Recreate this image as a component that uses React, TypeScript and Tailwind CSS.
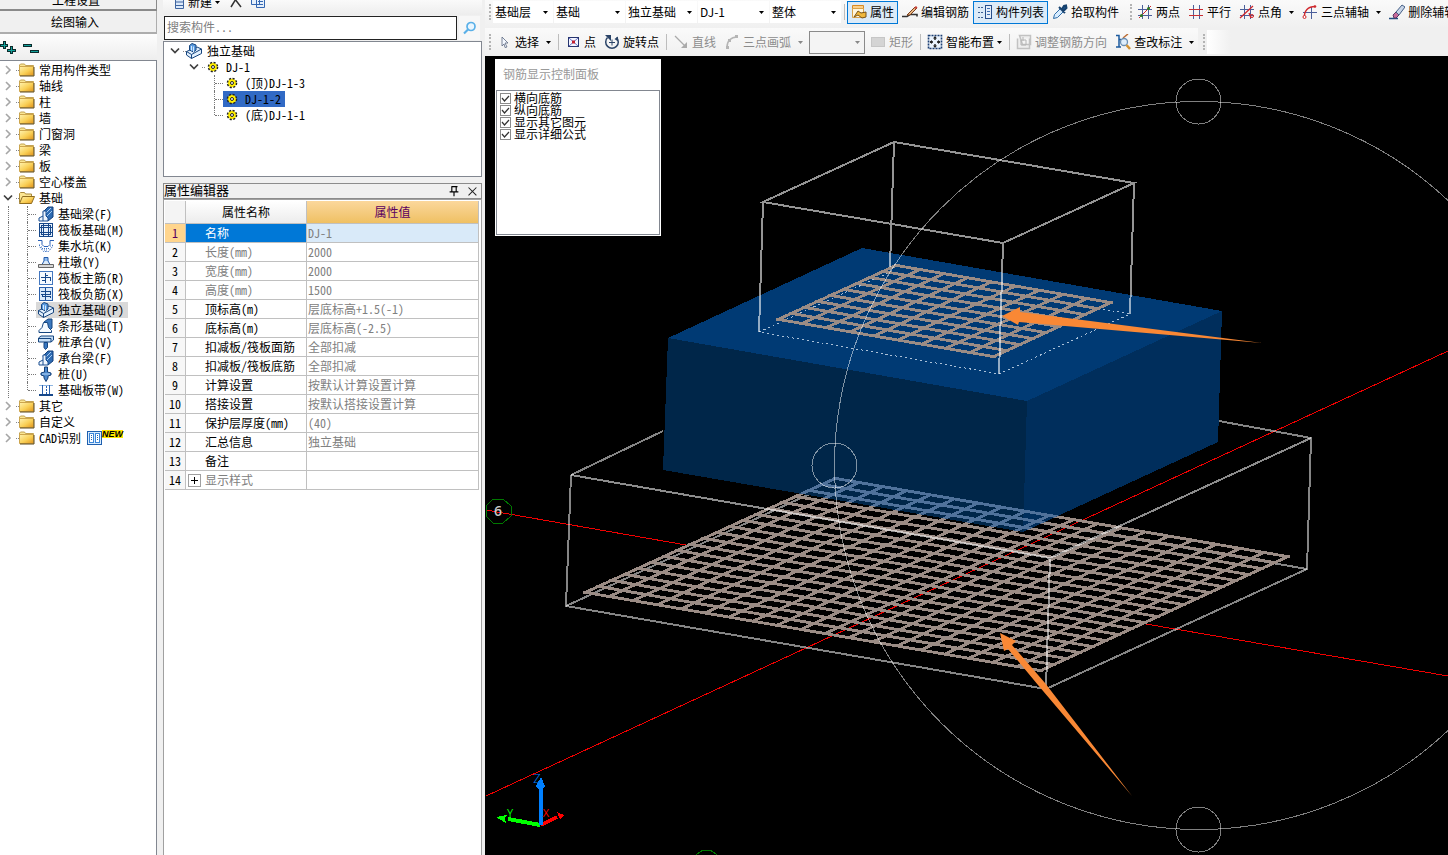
import { useState, type ReactNode } from "react";

type IconProps = { className?: string };

function Svg({ children, size = 16, className = "" }: { children: ReactNode; size?: number; className?: string }) {
  return (
    <svg width={size} height={size} viewBox="0 0 16 16" fill="none" aria-hidden="true" className={`shrink-0 ${className}`}>
      {children}
    </svg>
  );
}

/* ---------- tree icons ---------- */

function Folder({ open = false }: { open?: boolean }) {
  return (
    <Svg>
      <defs>
        <linearGradient id="folder" x1="0" y1="0" x2="1" y2="1">
          <stop offset="0" stopColor="#fff3b0" />
          <stop offset=".55" stopColor="#f9cf55" />
          <stop offset="1" stopColor="#e0931c" />
        </linearGradient>
      </defs>
      {open ? (
        <>
          <path d="M.5 12.5v-9l1-1h4l1 1.500h6v2" fill="#fbe694" stroke="#a98a3c" />
          <path d="M.5 13.500 3.500 6.500h12l-3 7z" fill="url(#folder)" stroke="#8f6d20" />
        </>
      ) : (
        <>
          <path d="M.5 4V3l1-1h4l1 1.500h8V6H.5z" fill="#fbe694" stroke="#c2a252" />
          <path d="M.5 4.500h14v9H.5z" fill="url(#folder)" stroke="#cda54c" />
          <path d="M15 5v9H1" stroke="#5e4a1d" />
        </>
      )}
    </Svg>
  );
}

function Chevron({ open = false }: { open?: boolean }) {
  return (
    <Svg className="w-4">
      {open ? (
        <path d="m4 5.500 4 4 4-4" stroke="#404040" strokeWidth="1.700" />
      ) : (
        <path d="m6 4 4 4-4 4" stroke="#a6a6a6" strokeWidth="1.600" />
      )}
    </Svg>
  );
}

const BeamIcon = () => (
  <Svg>
    <path d="M5 6 10 1h5v10l-5 4z" fill="#2f6cb3" stroke="#123f7a" />
    <path d="M8 7 13 2M9 10l5-5" stroke="#a9cdf2" />
    <path d="M1 15v-3l4-2V5h3v5l2 2v3z" fill="#eef5fd" stroke="#1b4f91" />
    <path d="M5 10v5" stroke="#1b4f91" />
  </Svg>
);
const RaftIcon = () => (
  <Svg>
    <g shapeRendering="crispEdges" stroke="#17488a">
      <rect x="1.500" y="1.500" width="13" height="13" fill="#e6f1fc" />
      <path d="M3.500 3.500h9v9h-9zM5.500 1.500v13M10.500 1.500v13M1.500 5.500h13M1.500 10.500h13" />
    </g>
  </Svg>
);
const PitIcon = () => (
  <Svg>
    <path d="M0 2.500h4v4l2 2h4l2-2v-4h4" stroke="#2c62b8" />
    <path d="M1.500 6.500v2l4 5h5l4-5v-2" stroke="#3f74c4" strokeDasharray="1.500 1" />
    <path d="M3 9h2M4 10.500h8M6 12h4M12 8h2" stroke="#3f74c4" strokeDasharray="1 1" />
  </Svg>
);
const PierIcon = () => (
  <Svg>
    <path d="M6 3.500h4v4H6z" fill="#8fbcf0" stroke="#2159a8" />
    <path d="m6 7-2 3.500h8L10 7" fill="#dcebfb" stroke="#2159a8" />
    <path d="M.5 10.500h15v3H.5z" fill="#d8d8d8" stroke="#666" />
  </Svg>
);
const MainBarIcon = () => (
  <Svg>
    <g shapeRendering="crispEdges">
      <rect x="1.500" y="1.500" width="13" height="13" fill="#f5faff" stroke="#4478c0" />
      <path d="M3 7.500h10M3.500 10.500h4M7.500 3v10M7 5.500h3M12.500 7v4" stroke="#17488a" />
    </g>
  </Svg>
);
const NegBarIcon = () => (
  <Svg>
    <g shapeRendering="crispEdges">
      <rect x="1.500" y="1.500" width="13" height="13" fill="#dbeafa" stroke="#2a60ad" />
      <path d="M7.500 2v12M3 5.500h9v2M4 10.500h8M4 8v2M12 10v2M3 8.500h10" stroke="#17488a" />
    </g>
  </Svg>
);
const PadIcon = () => (
  <Svg>
    <path d="M.5 8.500 11 4l4.500 2v4.500L5.500 15.500l-5-3.500z" fill="#e3f0fd" stroke="#16457f" />
    <path d="m.5 8.500 5 3 10-5.500M5.500 11.500v4" stroke="#16457f" />
    <path d="M3.500 2.500 6 .5l4 1.500v5L7.500 9l-4-2z" fill="#5a9be0" stroke="#16457f" />
    <path d="M5.500 3v4.500M7.500 3.500V9" stroke="#d6e9fb" />
  </Svg>
);
const StripIcon = () => (
  <Svg>
    <path d="m6 4 4-3h4v9l-2 2z" fill="#3c79bf" stroke="#15457f" />
    <path d="M1 14.500v-2l3-3 1.500-5h4l1 5 3 3v2z" fill="#f5faff" stroke="#15457f" />
  </Svg>
);
const CapIcon = () => (
  <Svg>
    <path d="M.5 4 3 2h12.500v4L13 8H.5z" fill="#c7dff7" stroke="#15457f" />
    <path d="M.5 4.500H13V8" stroke="#15457f" />
    <path d="M6 8.500v5l1.500 2 2-2v-5z" fill="#3a78c0" stroke="#15457f" />
  </Svg>
);
const PileIcon = () => (
  <Svg>
    <path d="M6.500 1h3v5l3.500 1v2L10 10v2l-2 3.500L6 12v-2L3 9V7l3.500-1z" fill="#4d89cd" stroke="#123e77" />
    <path d="M4 8h8" stroke="#b9d7f5" />
  </Svg>
);
const BandIcon = () => (
  <Svg>
    <g shapeRendering="crispEdges">
      <path d="M1 3.500h14" stroke="#8fb6e2" />
      <path d="M1 12.500h14" stroke="#17488a" strokeWidth="2" />
      <path d="M4.500 3v9M11.500 3v9" stroke="#2a60ad" />
      <path d="M8 4v8" stroke="#2a60ad" strokeDasharray="2 1" />
    </g>
  </Svg>
);
const GearIcon = () => (
  <Svg>
    <circle cx="8" cy="8" r="4.300" fill="#ffee00" stroke="#222" strokeWidth="2" strokeDasharray="2 1.380" />
    <circle cx="8" cy="8" r="3.800" fill="#ffee00" />
    <circle cx="8" cy="8" r="1.500" fill="#fff" stroke="#222" />
  </Svg>
);
const CadIcon = () => (
  <Svg>
    <g shapeRendering="crispEdges">
      <rect x="1.500" y="1.500" width="14" height="13" fill="#d8ecff" stroke="#1e5fae" />
      <path d="M3.500 3.500h4v9h-4zM9.500 3.500h4v9h-4z" fill="#fff" stroke="#3c86d8" />
      <path d="M5.500 5v6M11.500 5v6" stroke="#1e5fae" strokeDasharray="1 1" />
    </g>
  </Svg>
);

/* ---------- toolbar icons ---------- */

const PropertyIcon = () => (
  <Svg>
    <path d="M1.500 1.500h11v4h-11z" fill="#fbcf8a" stroke="#d98a22" />
    <path d="M1.500 4.500h11v9h-11z" fill="#fff6dc" stroke="#d9a24a" />
    <path d="m3 13 4-6 3 2 5-1v5l-4 1-4-3z" fill="#f0b83c" stroke="#77531a" />
  </Svg>
);
const EditBarIcon = () => (
  <Svg>
    <path d="M0 12.500h5l3-2h7v2" stroke="#333" strokeWidth="1.600" />
    <path d="m5 11 8-8 2 1-7 7z" fill="#e8b984" stroke="#7c3f1d" />
    <path d="m12 4 2-2 1.500 1.500-1.500 1.500z" fill="#c8423a" />
  </Svg>
);
const ListIcon = () => (
  <Svg>
    <g shapeRendering="crispEdges">
      <path d="M1 3.500h6M1 8.500h6M1 13.500h6" stroke="#3d5f93" strokeDasharray="2 1" />
      <rect x="8.500" y="1.500" width="6" height="13" fill="#e4eefa" stroke="#274f8c" />
      <path d="M10 4.500h3M10 7.500h3M10 10.500h3" stroke="#3f6fb2" />
    </g>
  </Svg>
);
const PickerIcon = () => (
  <Svg>
    <path d="m1.500 14.500 1-4 6-6 3 3-6 6z" fill="#d7ecff" stroke="#2e6ca8" />
    <path d="m7 3 6 6M10 5l2-3 2-.5.5 2.500-3 3z" fill="#1a558f" stroke="#17426e" strokeWidth="2" />
  </Svg>
);
const AxisGrid = ({ children }: { children?: ReactNode }) => (
  <Svg>
    <path d="M5.500 1v14M11.500 1v14M1 5.500h14M1 11.500h14" stroke="#4b5f9b" shapeRendering="crispEdges" />
    {children}
  </Svg>
);
const TwoPointIcon = () => (
  <AxisGrid>
    <path d="M2 14 14 2" stroke="#d0282d" />
    <circle cx="4.500" cy="11.500" r="1.500" fill="#257c25" />
    <circle cx="11.500" cy="4.500" r="1.500" fill="#257c25" />
  </AxisGrid>
);
const ParallelIcon = () => (
  <AxisGrid>
    <path d="M1 5.500h14M1 11.500h14" stroke="#c92f35" shapeRendering="crispEdges" />
  </AxisGrid>
);
const AngleIcon = () => (
  <AxisGrid>
    <path d="m1 14 13-12M10 9l2 5" stroke="#d0282d" strokeWidth="1.300" />
    <circle cx="13" cy="12" r="1.500" stroke="#d0282d" />
  </AxisGrid>
);
const ArcAxisIcon = () => (
  <Svg>
    <path d="M1 8.500h14M9.500 3v12" stroke="#4b5f9b" shapeRendering="crispEdges" />
    <path d="M2.500 13C2 7 6 2.500 13 2.500" stroke="#d0282d" strokeWidth="1.400" />
    <circle cx="2.500" cy="13" r="1.500" fill="#fff" stroke="#d0282d" />
    <circle cx="13" cy="2.500" r="1.300" fill="#d0282d" />
  </Svg>
);
const EraserIcon = () => (
  <Svg>
    <path d="M0 14.500h9" stroke="#234d80" strokeWidth="1.500" />
    <path d="m4 11 3-3 3 3-3 3H5z" fill="#c76a9a" stroke="#5b3763" />
    <path d="m7 8 6-7 3 2-6 8z" fill="#c9d6e8" stroke="#455f86" />
  </Svg>
);
const CursorIcon = () => (
  <Svg>
    <path d="m6 3 6 6H9l2 4-2 .5L8 10l-2 2z" fill="#f4f8ff" stroke="#5a6780" strokeWidth=".8" />
  </Svg>
);
const PointIcon = () => (
  <Svg>
    <g shapeRendering="crispEdges">
      <rect x="3.500" y="3.500" width="10" height="9" fill="#f4f5ff" stroke="#27356f" />
    </g>
    <path d="m4 4 9 8M13 4l-9 8" stroke="#6b78c8" />
    <rect x="7" y="6.500" width="3" height="3" fill="#c41f2e" />
  </Svg>
);
const RotateIcon = () => (
  <Svg>
    <path d="M3.500 3.500a6.300 6.300 0 1 0 9 0" stroke="#2b4468" strokeWidth="1.500" />
    <path d="M1 1h6v6zM14 2.500v5L10.500 5z" fill="#2b4468" />
    <path d="M8 5.500v6M5 8.500h6" stroke="#2b4468" />
  </Svg>
);
const LineIcon = () => (
  <Svg>
    <path d="m2 2 11 11" stroke="#aaa" strokeWidth="1.300" />
    <path d="M14 8v6H8z" fill="#aaa" />
  </Svg>
);
const ArcIcon = () => (
  <Svg>
    <path d="M3 13C3 7 7 3 13 3" stroke="#b5b5b5" strokeWidth="1.500" />
    <path d="M2 12h3v3H2zM11 1h3v3h-3zM4 5h3v3H4z" fill="#b5b5b5" />
  </Svg>
);
const RectIcon = () => (
  <Svg>
    <rect x="1.500" y="3.500" width="13" height="9" fill="#d4d4d4" stroke="#c6c6c6" />
  </Svg>
);
const SmartIcon = () => (
  <Svg>
    <rect x="1.500" y="1.500" width="13" height="13" fill="#eaf3fd" stroke="#1c3f73" strokeWidth="1.600" strokeDasharray="2 1" />
    <path d="M8 3v3M8 10v3M3 8h3M10 8h3" stroke="#111" strokeWidth="1.300" />
    <path d="m8 2 2 2.500H6zM8 14l2-2.500H6zM2.500 8 5 6v4zM13.500 8 11 6v4z" fill="#222" />
  </Svg>
);
const AdjustIcon = () => (
  <Svg>
    <path d="M1.500 4.500v10h12v-10M3.500 1.500h11v9h-8z" fill="#eee" stroke="#c2c2c2" strokeWidth="1.500" />
    <path d="M5 6h5v5H5zM7 3v4" stroke="#b4b4b4" />
  </Svg>
);
const CheckMarkIcon = () => (
  <Svg>
    <path d="M1 1.500h3v4h2M4 5v8H1M4 13h2" stroke="#1c5b9f" strokeWidth="1.500" />
    <path d="m8 4 5-4" stroke="#bb6c34" strokeWidth="1.500" />
    <circle cx="9" cy="8" r="3.500" fill="#dfeefb" stroke="#6b8fb3" strokeWidth="1.300" />
    <path d="m11.500 11 3.500 4" stroke="#d39233" strokeWidth="2.500" />
  </Svg>
);

/* ---------- left navigation ---------- */

const folders = ["常用构件类型", "轴线", "柱", "墙", "门窗洞", "梁", "板", "空心楼盖"];
const foundation: { label: string; Icon: (p: IconProps) => ReactNode }[] = [
  { label: "基础梁(F)", Icon: BeamIcon },
  { label: "筏板基础(M)", Icon: RaftIcon },
  { label: "集水坑(K)", Icon: PitIcon },
  { label: "柱墩(Y)", Icon: PierIcon },
  { label: "筏板主筋(R)", Icon: MainBarIcon },
  { label: "筏板负筋(X)", Icon: NegBarIcon },
  { label: "独立基础(P)", Icon: PadIcon },
  { label: "条形基础(T)", Icon: StripIcon },
  { label: "桩承台(V)", Icon: CapIcon },
  { label: "承台梁(F)", Icon: BeamIcon },
  { label: "桩(U)", Icon: PileIcon },
  { label: "基础板带(W)", Icon: BandIcon },
];

function FolderRow({ label, open = false, children }: { label: string; open?: boolean; children?: ReactNode }) {
  return (
    <li className="flex h-4 items-center">
      <Chevron open={open} />
      <span className="w-[3px] border-t border-dotted border-[#888]" />
      <Folder open={open} />
      <span className="ml-1 whitespace-nowrap">{label}</span>
      {children}
    </li>
  );
}

function Navigation() {
  const [selected, setSelected] = useState("独立基础(P)");
  return (
    <nav className="flex w-[157px] shrink-0 flex-col bg-[#f0f0f0]">
      <button className="flex h-[11px] items-end justify-center overflow-hidden border-r border-b-2 border-[#8a8a8a] pr-1 leading-[18px]">
        <span>工程设置</span>
      </button>
      <button className="h-[23px] border-r border-b-2 border-[#adadad] pr-[6px] text-center">绘图输入</button>
      <div className="flex h-[26px] items-center bg-gradient-to-b from-[#fdfdfd] to-[#eeeeee]">
        <button aria-label="全部展开">
          <Svg>
            <g shapeRendering="crispEdges">
              <path d="M4 2v8M0 6h8M11 7v8M7 11h9" stroke="#0b2b2b" strokeWidth="3" />
              <path d="M4 3v6M1 6h6M11 8v6M8 11h7" stroke="#11a09a" />
            </g>
          </Svg>
        </button>
        <button aria-label="全部折叠" className="ml-[7px]">
          <Svg>
            <g shapeRendering="crispEdges">
              <path d="M0 6h9M7 12h9" stroke="#0b2b2b" strokeWidth="3" />
              <path d="M1 6h7M8 12h7" stroke="#11a09a" />
            </g>
          </Svg>
        </button>
      </div>
      <ul className="flex-1 border-t border-r border-[#828790] bg-white pt-px">
        {folders.map((f) => (
          <FolderRow key={f} label={f} />
        ))}
        <FolderRow label="基础" open />
        {foundation.map(({ label, Icon }, i) => (
          <li key={label} className="flex h-4 items-center pl-2">
            <span className="h-4 w-[19px] border-l border-dotted border-[#777]" />
            <span className={i === foundation.length - 1 ? "h-2 w-px self-start border-l border-dotted border-[#777]" : "h-4 w-px border-l border-dotted border-[#777]"} />
            <span className="w-2 border-t border-dotted border-[#777]" />
            <button
              onClick={() => setSelected(label)}
              className={`flex h-4 items-center gap-1 pr-1 pl-[2px] whitespace-nowrap ${selected === label ? "bg-[#d9d9d9]" : ""}`}
            >
              <Icon />
              {label}
            </button>
          </li>
        ))}
        <FolderRow label="其它" />
        <FolderRow label="自定义" />
        <FolderRow label="CAD识别">
          <span className="ml-[5px] flex">
            <CadIcon />
          </span>
          <span className="mb-2 bg-[#ffe600] font-['Liberation_Sans',sans-serif] text-[9px] leading-[8px] font-bold italic">NEW</span>
        </FolderRow>
      </ul>
    </nav>
  );
}

/* ---------- component list and properties ---------- */

function ComponentTree() {
  const [selected, setSelected] = useState("DJ-1-2");
  const leaves = ["(顶)DJ-1-3", "DJ-1-2", "(底)DJ-1-1"];
  return (
    <ul className="h-[136px] border border-[#828790] bg-white pt-px">
      <li className="flex h-4 items-center pl-[3px]">
        <Chevron open />
        <span className="w-[3px] border-t border-dotted border-[#888]" />
        <PadIcon />
        <span className="ml-[5px]">独立基础</span>
      </li>
      <li className="flex h-4 items-center pl-[22px]">
        <Chevron open />
        <span className="w-[3px] border-t border-dotted border-[#888]" />
        <GearIcon />
        <span className="ml-[5px]">DJ-1</span>
      </li>
      {leaves.map((leaf, i) => (
        <li key={leaf} className="flex h-4 items-center pl-[50px]">
          <span className={i === 2 ? "h-2 w-px self-start border-l border-dotted border-[#777]" : "h-4 w-px border-l border-dotted border-[#777]"} />
          <span className="w-2 border-t border-dotted border-[#777]" />
          <button
            onClick={() => setSelected(leaf)}
            className={`flex h-4 items-center gap-[5px] pr-1 pl-px whitespace-nowrap ${selected === leaf ? "bg-[#316ac5]" : ""}`}
          >
            <GearIcon />
            {leaf}
          </button>
        </li>
      ))}
    </ul>
  );
}

const properties: [string, string, boolean][] = [
  ["名称", "DJ-1", false],
  ["长度(mm)", "2000", true],
  ["宽度(mm)", "2000", true],
  ["高度(mm)", "1500", true],
  ["顶标高(m)", "层底标高+1.5(-1)", false],
  ["底标高(m)", "层底标高(-2.5)", false],
  ["扣减板/筏板面筋", "全部扣减", false],
  ["扣减板/筏板底筋", "全部扣减", false],
  ["计算设置", "按默认计算设置计算", false],
  ["搭接设置", "按默认搭接设置计算", false],
  ["保护层厚度(mm)", "(40)", false],
  ["汇总信息", "独立基础", false],
  ["备注", "", false],
  ["显示样式", "", true],
];

function PropertyTable() {
  return (
    <table className="w-full table-fixed border-separate border-spacing-0">
      <colgroup>
        <col className="w-[21px]" />
        <col className="w-[121px]" />
        <col />
      </colgroup>
      <thead>
        <tr className="h-[23px]">
          <th className="border-r border-b border-[#c0c0c0] bg-[#f4f4f4] p-0" />
          <th className="border-r border-b border-[#c0c0c0] bg-gradient-to-b from-white to-[#ececec] p-0 font-normal">属性名称</th>
          <th className="border-r border-b border-[#c0c0c0] bg-gradient-to-b from-[#fbd79b] to-[#efc062] p-0 font-normal text-[#5a0060]">属性值</th>
        </tr>
      </thead>
      <tbody>
        {properties.map(([name, value, muted], i) => (
          <tr key={name} className="h-[19px] leading-[18px]">
            <td className={`border-r border-b border-[#c0c0c0] p-0 text-center ${i === 0 ? "bg-[#ffd58d] text-[#5a0060]" : "bg-[#f7f7f7]"}`}>{i + 1}</td>
            <td className={`border-r border-b border-[#c0c0c0] p-0 whitespace-nowrap ${i === 0 ? "bg-[#0078d7] text-white" : muted ? "text-[#808080]" : ""}`}>
              <div className="flex items-center">
                <span className="flex w-[19px] shrink-0 pl-[2px]">
                  {i === 13 && (
                    <button aria-label="展开显示样式" className="flex">
                      <svg width="13" height="13" fill="none" shapeRendering="crispEdges">
                        <rect x=".5" y=".5" width="12" height="12" fill="#fff" stroke="#a0a0a0" />
                        <path d="M3 6.500h7M6.500 3v7" stroke="#000" />
                      </svg>
                    </button>
                  )}
                </span>
                {name}
              </div>
            </td>
            <td className={`border-r border-b border-[#c0c0c0] py-0 pr-0 pl-px whitespace-nowrap text-[#808080] ${i === 0 ? "bg-[#d9eaf9]" : ""}`}>{value}</td>
          </tr>
        ))}
      </tbody>
    </table>
  );
}

function Inspector() {
  return (
    <section className="flex w-[328px] shrink-0 flex-col bg-[#f0f0f0] pr-[3px] pl-[6px]">
      <div className="flex h-[15px] items-end overflow-hidden bg-gradient-to-b from-[#fafafa] to-[#ededed] pl-[6px]">
        <button className="flex items-center gap-[3px] leading-[26px]">
          <Svg>
            <path d="M0 5h3M5 4v2" stroke="#a67520" strokeWidth="2" />
            <path d="M6.500 4.500h8v10h-8z" fill="#dbe9fa" stroke="#3f65a0" />
            <path d="M7 8h7M7 11.500h7" stroke="#3f65a0" />
          </Svg>
          新建
          <svg width="5" height="3" aria-hidden="true"><path d="M0 0h5L2.500 3z" /></svg>
        </button>
        <button aria-label="删除" className="mb-[6px] ml-2">
          <Svg><path d="m3 14 8-13M3 1l10 13" stroke="#333" strokeWidth="1.500" /></Svg>
        </button>
        <button aria-label="复制" className="mb-[6px] ml-[6px]">
          <Svg>
            <path d="M1.500 2.500h8v9h-8zM6.500 5.500h8v9h-8z" fill="#e6f0fb" stroke="#3567b2" />
            <path d="M8 8.500h5M8 11.500h5" stroke="#3567b2" />
          </Svg>
        </button>
      </div>
      <div className="flex h-[26px] items-start pt-px pl-px">
        <input
          aria-label="搜索构件"
          placeholder="搜索构件..."
          className="h-6 min-w-0 flex-1 border border-[#222] bg-white px-[2px] pb-1 outline-none placeholder:text-[#808080]"
        />
        <button aria-label="搜索" className="mx-[2px] flex h-6 w-[21px] items-center justify-center bg-[#f7f7f7]">
          <Svg>
            <circle cx="9" cy="6.500" r="4" fill="#e9f6ff" stroke="#5ab0e8" strokeWidth="1.700" />
            <path d="m6 9.500-4 4" stroke="#5ab0e8" strokeWidth="2.200" />
          </Svg>
        </button>
      </div>
      <ComponentTree />
      <header className="mt-[6px] flex h-4 items-center border border-[#8c8c8c]">
        <h2 className="flex-1 pb-[2px] text-[13px] leading-[14px]">属性编辑器</h2>
        <button aria-label="固定">
          <Svg size={14}>
            <path d="M5 3h7M5.500 3v6M10.500 3v6M3 9h10M8 9v5" stroke="#000" strokeWidth="1.300" />
          </Svg>
        </button>
        <button aria-label="关闭" className="mr-[2px] ml-1">
          <Svg size={14}><path d="m4 4 9 9M13 4l-9 9" stroke="#222" strokeWidth="1.200" /></Svg>
        </button>
      </header>
      <div className="flex-1 border-x border-t border-[#a0a0a0] bg-white px-px pt-px pr-[2px]">
        <PropertyTable />
      </div>
    </section>
  );
}

/* ---------- toolbars ---------- */

function Arrow({ muted = false }: { muted?: boolean }) {
  return (
    <svg width="5" height="3" aria-hidden="true" className="shrink-0">
      <path d="M0 0h5L2.500 3z" fill={muted ? "#888" : "#000"} />
    </svg>
  );
}

const Grip = () => <span aria-hidden="true" className="h-4 w-[3px] shrink-0 border-l-2 border-dotted border-[#b4b4b4]" />;
const Divider = () => <span aria-hidden="true" className="mr-[2px] ml-[3px] h-4 w-px shrink-0 bg-[#bdbdbd]" />;

function Combo({ value, wide = true }: { value: string; wide?: boolean }) {
  return (
    <label className={`relative flex h-[22px] shrink-0 bg-white ${wide ? "w-[71px]" : "w-[60px]"}`}>
      <select aria-label={value} className="w-full appearance-none pl-[2px] outline-none">
        <option>{value}</option>
      </select>
      <span className="pointer-events-none absolute inset-y-0 right-[5px] flex items-center">
        <Arrow />
      </span>
    </label>
  );
}

type ToolProps = { icon: ReactNode; label: string; active?: boolean; disabled?: boolean; menu?: boolean; compact?: boolean };

function Tool({ icon, label, active, disabled, menu, compact }: ToolProps) {
  return (
    <button
      disabled={disabled}
      className={`flex h-[23px] shrink-0 items-center gap-[3px] border px-[3px] whitespace-nowrap ${active ? "border-[#0078d7] bg-[#dcebf8]" : "border-transparent"} ${disabled ? "text-[#8c8c8c]" : ""}`}
    >
      {icon}
      {label}
      {menu && (
        <span className={compact ? "ml-0" : "ml-1"}>
          <Arrow muted={disabled} />
        </span>
      )}
    </button>
  );
}

function Toolbars() {
  return (
    <div className="flex h-14 flex-col overflow-hidden bg-[#f0f0f0] font-['Noto_Sans_CJK_SC',sans-serif]">
      <div className="flex h-7 items-start bg-gradient-to-b from-[#fafafa] to-[#f0f0f0]">
        <div className="flex h-6 items-center gap-px pl-1">
          <Grip />
          <Combo value="基础层" wide={false} />
          <Combo value="基础" />
          <Combo value="独立基础" />
          <Combo value="DJ-1" />
          <Combo value="整体" />
        </div>
        <div className="flex h-6 items-center">
          <Divider />
          <Tool icon={<PropertyIcon />} label="属性" active />
          <Tool icon={<EditBarIcon />} label="编辑钢筋" />
          <Tool icon={<ListIcon />} label="构件列表" active />
          <Tool icon={<PickerIcon />} label="拾取构件" />
        </div>
        <div className="flex h-6 items-center pl-[7px]">
          <Grip />
          <Tool icon={<TwoPointIcon />} label="两点" />
          <Tool icon={<ParallelIcon />} label="平行" />
          <Tool icon={<AngleIcon />} label="点角" menu />
          <Tool icon={<ArcAxisIcon />} label="三点辅轴" menu />
          <Tool icon={<EraserIcon />} label="删除辅轴" />
        </div>
      </div>
      <div className="flex h-7 items-center bg-[#f0f0f0]">
        <div className="flex h-7 items-center bg-gradient-to-b from-[#fafafa] to-[#f0f0f0] pl-1">
          <Grip />
          <Tool icon={<CursorIcon />} label="选择" menu />
          <Divider />
          <Tool icon={<PointIcon />} label="点" />
          <Tool icon={<RotateIcon />} label="旋转点" />
          <Divider />
          <Tool icon={<LineIcon />} label="直线" disabled />
          <Tool icon={<ArcIcon />} label="三点画弧" disabled menu />
          <label className="relative mr-px ml-[2px] flex h-[23px] w-14 shrink-0 border border-[#8a8a8a] bg-[#f4f4f4]">
            <select aria-label="绘制方式" disabled className="w-full appearance-none" />
            <span className="pointer-events-none absolute inset-y-0 right-1 flex items-center">
              <Arrow muted />
            </span>
          </label>
          <Tool icon={<RectIcon />} label="矩形" disabled />
          <Divider />
          <Tool icon={<SmartIcon />} label="智能布置" menu compact />
          <Divider />
          <Tool icon={<AdjustIcon />} label="调整钢筋方向" disabled />
          <Tool icon={<CheckMarkIcon />} label="查改标注" menu />
        </div>
        <div className="ml-px flex h-7 items-center gap-px pl-1">
          <Grip />
          <span className="h-6 w-6 bg-gradient-to-r from-white to-[#f0f0f0]" />
        </div>
      </div>
    </div>
  );
}

/* ---------- 3D view ---------- */

type Pt = [number, number];
const mix = (a: Pt, b: Pt, t: number): Pt => [a[0] + (b[0] - a[0]) * t, a[1] + (b[1] - a[1]) * t];
const seg = (a: Pt, b: Pt) => `M${a[0].toFixed(1)} ${a[1].toFixed(1)}L${b[0].toFixed(1)} ${b[1].toFixed(1)}`;

/** Rebar mesh: n bars each way across the quad left-top-right-bottom. */
function meshPath(l: Pt, t: Pt, r: Pt, b: Pt, n: number, inset: number) {
  let d = "";
  for (let i = 0; i < n; i++) {
    const k = i / (n - 1);
    const m = inset + k * (1 - 2 * inset);
    d += seg(mix(l, t, k), mix(b, r, k)) + seg(mix(l, b, m), mix(t, r, m));
  }
  return d;
}

const lowerMesh = meshPath([583, 592], [833, 478], [1290, 557], [1043, 671], 20, 0.005);
const upperMesh = meshPath([776, 319], [894, 265], [1113, 303], [996, 357], 10, 0.01);

function Scene() {
  return (
    <svg className="absolute inset-0 h-full w-full" fill="none" role="img" aria-label="独立基础钢筋三维">
      <defs>
        <clipPath id="block">
          <path d="M668 338 862 248 1222 311 1218 442 1023 532 663 470z" />
        </clipPath>
      </defs>
      <g transform="translate(-485 -56)" shapeRendering="crispEdges">
        <path d="M486 510 686 545M1146 624 1448 676M486 796 1448 351" stroke="#f00000" />
        <g stroke="#fff" strokeOpacity=".52" strokeWidth="2">
          <path d="M566 606 827 486 1307 569" />
          <path d="M571 475 663 431M1219 421 1311 438 1307 569 1046 689 566 606 571 475" />
        </g>
        <path d={lowerMesh} stroke="#9b8c85" strokeWidth="2.900" />
        <path d="M571 475 1050 558 1311 438M1050 558 1046 689" stroke="#fff" strokeOpacity=".55" strokeWidth="2" />

        <path d="M668 338 862 248 1222 311 1027 401z" fill="#003a74" />
        <path d="M668 338 1027 401 1023 532 663 470z" fill="#002649" />
        <path d="M1027 401 1222 311 1218 442 1023 532z" fill="#002e5c" />
        <path d={lowerMesh} stroke="#50729b" strokeWidth="2.900" clipPath="url(#block)" />

        <path d="M759 332 890 272 1130 314 999 374z" stroke="#a9c0d8" strokeDasharray="2 3" />
        <path d={upperMesh} stroke="#9b8c85" strokeWidth="2.900" />
        <g stroke="#fff" strokeOpacity=".58" strokeWidth="2">
          <path d="M763 202 894 142 1134 183 1003 243zM763 202 759 332M894 142 890 267M1134 183 1130 314M1003 243 999 374" />
        </g>

        <g stroke="#fff" strokeOpacity=".5">
          <circle cx="1198.500" cy="465.500" r="364" />
          <circle cx="1198.500" cy="101.500" r="22.500" />
          <circle cx="1198.500" cy="829.500" r="22.500" />
          <circle cx="834.500" cy="465.500" r="22.500" />
        </g>

        <path d="m493 499 10 0 8 7v10l-8 7h-10l-7-7v-10zM694 861l3-7 6-4h7l6 4 3 7" stroke="#007800" />

        <g shapeRendering="auto">
          <path d="m1002 316 18-9v5l242 31-243-21-1 3z" fill="#f98835" />
          <path d="m1000 633 16 8-4 4 33 38 87 113-94-111-30-36-4 2z" fill="#f98835" />
        </g>

        <path d="M540 825 508 819" stroke="#00ff00" strokeWidth="4" />
        <path d="m496 817 11-2-2 3 1 5z" fill="#00ff00" />
        <path d="m541 825 16-8" stroke="#ff0000" strokeWidth="4" />
        <path d="m557 812 7 3-4 4z" fill="#ff0000" />
        <path d="M541 825V785" stroke="#0080ff" strokeWidth="4" />
        <path d="m541 777 4 9-3 4h-3l-3-4z" fill="#0080ff" />
      </g>
      <g className="font-['Open_Sans',sans-serif]" textAnchor="middle">
        <text x="13" y="460" className="text-[14px] font-semibold" fill="#c8c8c8">6</text>
        <text x="52" y="727" className="text-[13px] font-light" fill="#0080ff">Z</text>
        <text x="25" y="761" className="text-[11px]" fill="#00ff00">Y</text>
        <text x="61" y="761" className="text-[11px]" fill="#ff0000">X</text>
      </g>
    </svg>
  );
}

function RebarPanel() {
  const options = ["横向底筋", "纵向底筋", "显示其它图元", "显示详细公式"];
  return (
    <aside className="absolute top-[3px] left-[10px] flex h-[177px] w-[166px] flex-col bg-white p-px">
      <h3 className="flex h-[30px] items-center px-[7px] pb-[3px] font-['Noto_Sans_CJK_SC',sans-serif] text-[#999]">钢筋显示控制面板</h3>
      <div className="flex-1 border border-[#828790] pt-px pl-[3px]">
        {options.map((o) => (
          <label key={o} className="flex h-3 items-center gap-[3px] leading-3">
            <span className="relative flex">
              <input type="checkbox" defaultChecked className="peer h-[11px] w-[11px] appearance-none border border-[#8c8c8c] bg-white" />
              <svg width="11" height="11" fill="none" className="pointer-events-none absolute inset-0 hidden peer-checked:block">
                <path d="m2 5 2.500 3L9 3" stroke="#333" strokeWidth="1.200" />
              </svg>
            </span>
            {o}
          </label>
        ))}
      </div>
    </aside>
  );
}

export default function App() {
  return (
    <div className="flex h-screen overflow-hidden bg-[#f0f0f0] font-['Noto_Sans_Mono_CJK_SC','Noto_Sans_CJK_SC',monospace] text-[12px] leading-4 text-black">
      <Navigation />
      <Inspector />
      <main className="flex min-w-0 flex-1 flex-col">
        <Toolbars />
        <div className="relative flex-1 overflow-hidden bg-black">
          <Scene />
          <RebarPanel />
        </div>
      </main>
    </div>
  );
}
